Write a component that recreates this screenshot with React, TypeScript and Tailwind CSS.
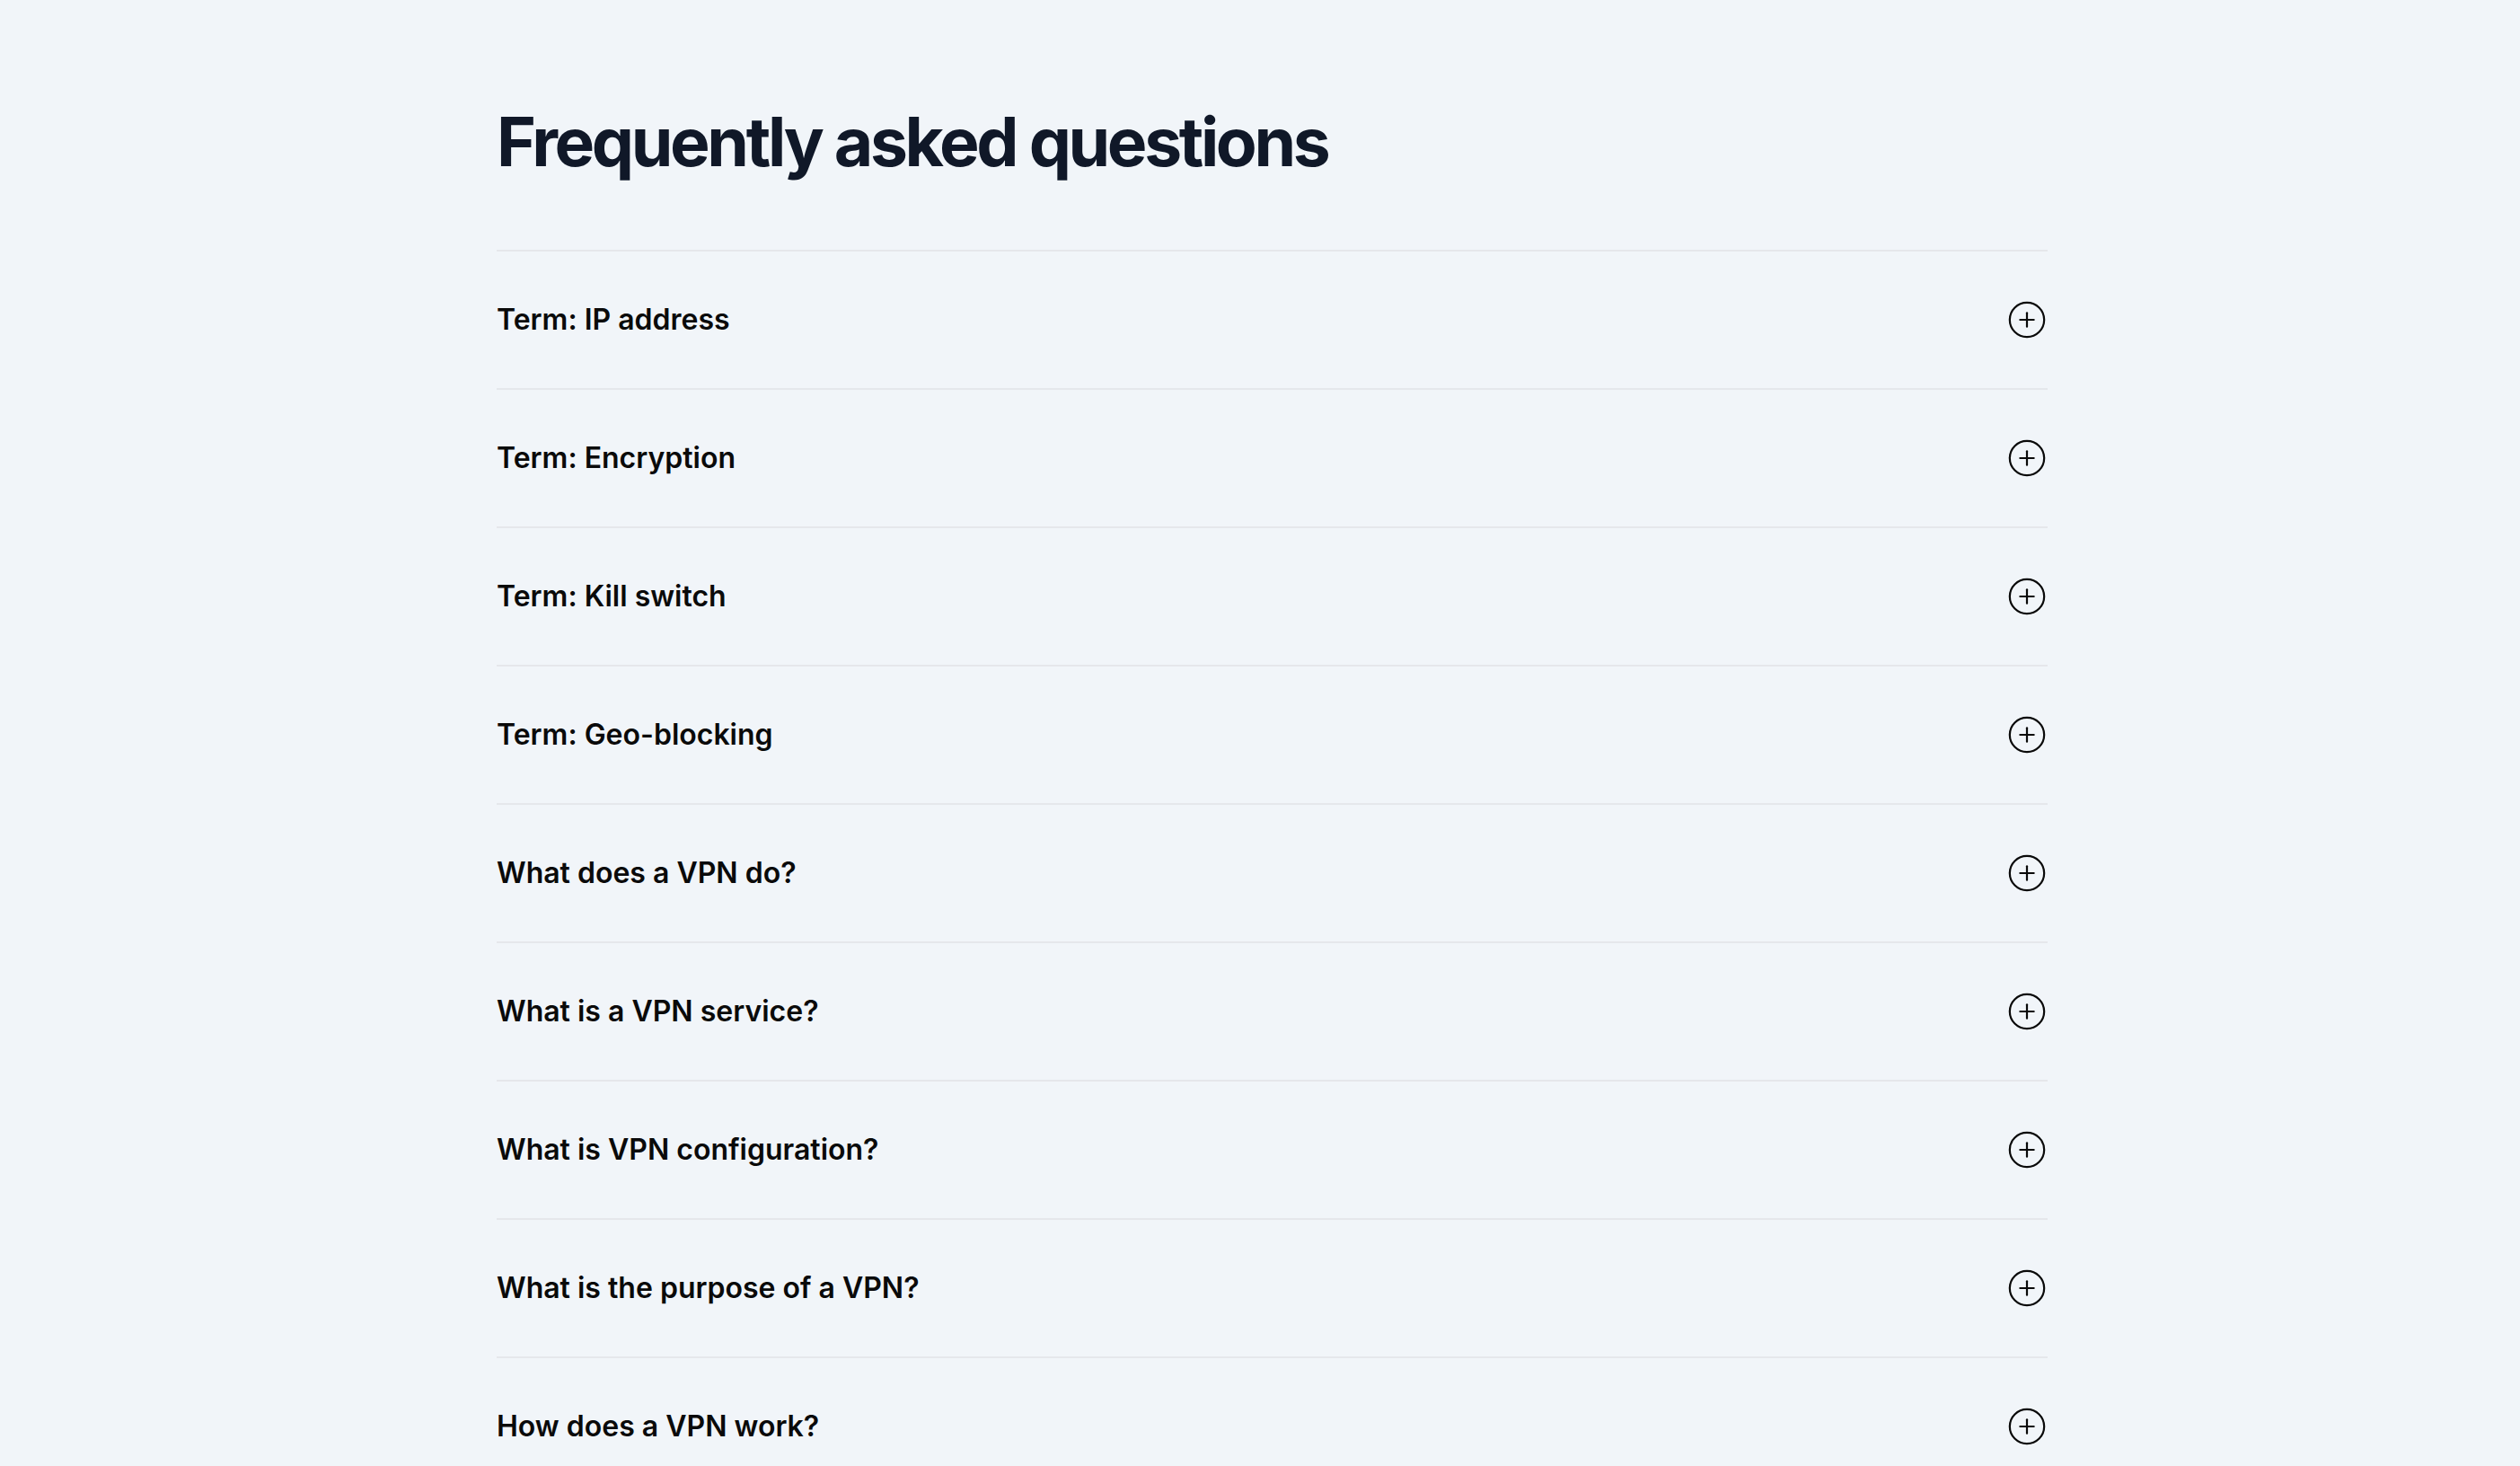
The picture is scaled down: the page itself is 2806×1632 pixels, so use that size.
import { CirclePlus } from "lucide-react";

const questions = [
  "Term: IP address",
  "Term: Encryption",
  "Term: Kill switch",
  "Term: Geo-blocking",
  "What does a VPN do?",
  "What is a VPN service?",
  "What is VPN configuration?",
  "What is the purpose of a VPN?",
  "How does a VPN work?",
];

export default function App() {
  return (
    <div
      className="min-h-screen bg-[#f1f5f9]"
      style={{ fontFamily: "Inter, 'Noto Sans', sans-serif" }}
    >
      <section className="ml-[553px] w-[1727px] pt-[120px]">
        <h2 className="text-[75px] font-bold leading-none tracking-[-0.045em] text-gray-900">
          Frequently asked questions
        </h2>

        <ul className="mt-[83px]">
          {questions.map((q) => (
            <li key={q} className="border-t-2 border-gray-200">
              <button
                type="button"
                className="flex h-[152px] w-full items-center justify-between text-left"
              >
                <span className="text-[32px] font-semibold text-neutral-950">{q}</span>
                <CirclePlus size={46} strokeWidth={2.2} absoluteStrokeWidth className="text-neutral-950" />
              </button>
            </li>
          ))}
        </ul>
      </section>
    </div>
  );
}
